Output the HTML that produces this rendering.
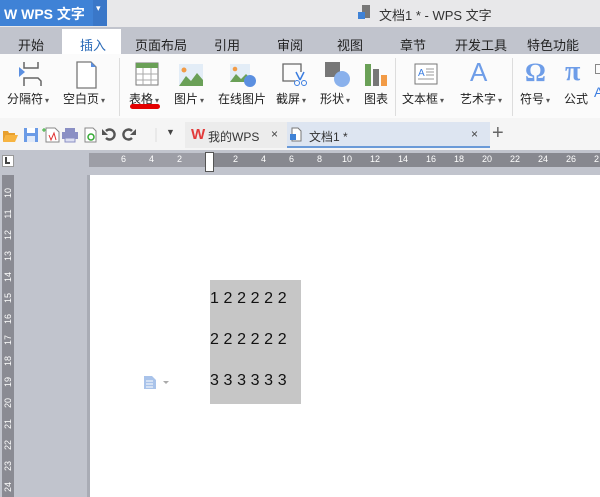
<!DOCTYPE html>
<html><head><meta charset="utf-8"><style>
*{margin:0;padding:0;box-sizing:border-box}
body{width:600px;height:497px;overflow:hidden;background:#c1c4cd;position:relative;font-family:"Liberation Sans","Noto Sans CJK SC",sans-serif;font-size:12px;color:#222}
.a{position:absolute}
.t{position:absolute;white-space:nowrap}
.lbl{position:absolute;top:90px;font-size:12px;color:#222;white-space:nowrap}
.dd{font-size:8px;color:#555;margin-left:2px}
.rn{position:absolute;top:154px;font-size:9px;color:#fff;font-family:"Liberation Sans",sans-serif}
.vn{position:absolute;left:2px;width:12px;font-size:9px;color:#fff;transform:rotate(-90deg);text-align:center}
.row{position:absolute;left:210px;font-size:16px;color:#111;letter-spacing:0.1px;white-space:nowrap}
</style></head><body>
<!-- title bar -->
<div class="a" style="left:0;top:0;width:600px;height:27px;background:#e8e8ea"></div>
<div class="a" style="left:0;top:0;width:93px;height:26px;background:#3f82d6"></div>
<div class="a" style="left:93px;top:0;width:14px;height:26px;background:#3a77c8"></div>
<div class="t" style="left:4px;top:4px;color:#fff;font-weight:bold;font-size:14px">W WPS 文字</div>
<div class="t" style="left:96px;top:3px;color:#fff;font-size:9px">▾</div>
<svg class="a" style="left:358px;top:5px" width="14" height="14"><rect x="4" y="0" width="8" height="13" fill="#777"/><rect x="0" y="7" width="7" height="7" fill="#3f82d6"/></svg>
<div class="t" style="left:379px;top:5px;font-size:13px;color:#333">文档1 * - WPS 文字</div>
<!-- tabs -->
<div class="a" style="left:62px;top:29px;width:59px;height:25px;background:#fff"></div>
<div class="t" style="left:18px;top:35px;font-size:13px">开始</div>
<div class="t" style="left:80px;top:35px;font-size:13px;color:#2b6bb8">插入</div>
<div class="t" style="left:135px;top:35px;font-size:13px">页面布局</div>
<div class="t" style="left:214px;top:35px;font-size:13px">引用</div>
<div class="t" style="left:277px;top:35px;font-size:13px">审阅</div>
<div class="t" style="left:337px;top:35px;font-size:13px">视图</div>
<div class="t" style="left:400px;top:35px;font-size:13px">章节</div>
<div class="t" style="left:455px;top:35px;font-size:13px">开发工具</div>
<div class="t" style="left:527px;top:35px;font-size:13px">特色功能</div>
<!-- ribbon -->
<div class="a" style="left:0;top:54px;width:600px;height:64px;background:#fbfbfb"></div>
<div class="a" style="left:119px;top:58px;width:1px;height:58px;background:#ddd"></div>
<div class="a" style="left:395px;top:58px;width:1px;height:58px;background:#ddd"></div>
<div class="a" style="left:512px;top:58px;width:1px;height:58px;background:#ddd"></div>
<svg class="a" style="left:18px;top:61px" width="26" height="26"><path d="M6 1v6h14V1M6 25v-8h14l3 3v5" fill="none" stroke="#666" stroke-width="1.5"/><path d="M1 6l6 5-6 5z" fill="#5b8fe0"/></svg>
<svg class="a" style="left:76px;top:61px" width="22" height="28"><path d="M1 1h14l5 5v21H1z" fill="#fff" stroke="#777" stroke-width="1.3"/><path d="M15 1l5 5h-5z" fill="#5b8fe0"/></svg>
<div class="lbl" style="left:7px">分隔符<span class="dd">▾</span></div>
<div class="lbl" style="left:63px">空白页<span class="dd">▾</span></div>
<svg class="a" style="left:135px;top:62px" width="24" height="24"><rect x="1" y="1" width="22" height="22" fill="#fff" stroke="#777"/><rect x="1" y="1" width="22" height="5" fill="#6aa057"/><path d="M1 12h22M1 18h22M8 6v17M16 6v17" stroke="#aaa"/></svg>
<svg class="a" style="left:179px;top:64px" width="24" height="22"><rect width="24" height="22" fill="#e3edf7"/><circle cx="5" cy="6" r="2.5" fill="#f29b46"/><path d="M0 22l7-10 5 5 6-8 6 7v6z" fill="#6aa057"/></svg>
<svg class="a" style="left:230px;top:64px" width="26" height="24"><rect width="20" height="18" fill="#e3edf7"/><circle cx="5" cy="5" r="2.3" fill="#f29b46"/><path d="M0 18l6-8 5 5 5-5 4 4v4z" fill="#6aa057"/><circle cx="20" cy="17" r="6" fill="#5b8fe0"/></svg>
<svg class="a" style="left:281px;top:62px" width="26" height="26"><path d="M14 19H2V2h18v8" fill="none" stroke="#666" stroke-width="1.3"/><path d="M15 10l4 8M23 10l-4 8" stroke="#3b7de0" stroke-width="1.5"/><circle cx="16" cy="21" r="2.5" fill="none" stroke="#3b7de0"/><circle cx="23" cy="21" r="2.5" fill="none" stroke="#3b7de0"/></svg>
<svg class="a" style="left:325px;top:62px" width="26" height="26"><rect x="0" y="0" width="15" height="15" fill="#777"/><circle cx="17" cy="17" r="8" fill="#8ab1ec"/></svg>
<svg class="a" style="left:365px;top:62px" width="24" height="24"><rect x="0" y="2" width="6" height="22" fill="#6aa057"/><rect x="8" y="7" width="6" height="17" fill="#777"/><rect x="16" y="13" width="6" height="11" fill="#f29b46"/></svg>
<div class="lbl" style="left:129px;color:#222">表格<span class="dd">▾</span></div>
<div class="a" style="left:130px;top:104px;width:30px;height:5px;border-radius:3px;background:#e40000"></div>
<div class="lbl" style="left:174px">图片<span class="dd">▾</span></div>
<div class="lbl" style="left:218px">在线图片</div>
<div class="lbl" style="left:276px">截屏<span class="dd">▾</span></div>
<div class="lbl" style="left:320px">形状<span class="dd">▾</span></div>
<div class="lbl" style="left:364px">图表</div>
<svg class="a" style="left:414px;top:63px" width="24" height="22"><rect x="1" y="1" width="22" height="20" fill="#fff" stroke="#777"/><text x="4" y="13" font-size="10" fill="#3b7de0" font-family="Liberation Sans">A</text><path d="M12 6h8M12 9h8M12 12h8M4 16h16" stroke="#999"/></svg>
<div class="t" style="left:470px;top:57px;font-size:26px;color:#6e9de8;font-family:'Liberation Sans'">A</div>
<div class="lbl" style="left:402px">文本框<span class="dd">▾</span></div>
<div class="lbl" style="left:460px">艺术字<span class="dd">▾</span></div>
<div class="t" style="left:525px;top:58px;font-size:26px;color:#6e9de8;font-family:'Liberation Serif';font-weight:bold">Ω</div>
<div class="t" style="left:565px;top:56px;font-size:28px;color:#6e9de8;font-family:'Liberation Serif';font-weight:bold">π</div>
<div class="lbl" style="left:520px">符号<span class="dd">▾</span></div>
<div class="lbl" style="left:564px">公式</div>
<div class="a" style="left:595px;top:64px;width:6px;height:10px;border:1px solid #888"></div>
<div class="t" style="left:594px;top:84px;color:#3b7de0;font-size:14px">A</div>
<!-- quick toolbar -->
<div class="a" style="left:0;top:118px;width:600px;height:32px;background:#f5f5f5"></div>
<svg class="a" style="left:2px;top:127px" width="160" height="16">
<path d="M1 4h5l1 2h6v2H4l-3 7z" fill="#e8a02e"/><path d="M1 15l3-7h12l-3 7z" fill="#f7b441"/>
<rect x="22" y="1" width="14" height="14" fill="#6b9be6"/><rect x="25" y="1" width="8" height="5" fill="#fff"/><rect x="25" y="9" width="8" height="6" fill="#dfe9f9"/>
<path d="M44 1h9l4 4v10H44z" fill="#fff" stroke="#888"/><path d="M47 8l2 5 3-7 2 7" stroke="#e03030" fill="none"/><path d="M40 3h4M42 1v4" stroke="#3a3"/>
<rect x="63" y="1" width="10" height="4" fill="#8a8fc4"/><rect x="60" y="5" width="16" height="7" fill="#8a8fc4"/><rect x="63" y="11" width="10" height="4" fill="#dcdff2" stroke="#8a8fc4"/>
<path d="M83 1h8l3 3v11H83z" fill="#fff" stroke="#888"/><circle cx="89" cy="10" r="3" fill="none" stroke="#3a3" stroke-width="1.5"/>
<path d="M104 11a5 5 0 1 0 0-7" fill="none" stroke="#555" stroke-width="2.4"/><path d="M100 2v6h6z" fill="#555"/>
<path d="M130 11a5 5 0 1 1 0-7" fill="none" stroke="#555" stroke-width="2.4"/><path d="M134 2v6h-6z" fill="#555"/>
<path d="M154 1v14" stroke="#ddd"/></svg>
<div class="t" style="left:166px;top:127px;font-size:9px;color:#444">▼</div>
<div class="a" style="left:185px;top:122px;width:102px;height:26px;background:#ececec"></div>
<div class="t" style="left:191px;top:126px;font-size:15px;font-weight:bold;color:#e23b3b;font-family:'Liberation Sans'">W</div>
<div class="t" style="left:208px;top:128px;font-size:12px;color:#333">我的WPS</div>
<div class="t" style="left:271px;top:127px;font-size:12px;color:#444">×</div>
<div class="a" style="left:287px;top:122px;width:203px;height:26px;background:#dde5f1;border-bottom:2px solid #6a9ad8"></div>
<svg class="a" style="left:290px;top:127px" width="12" height="15"><path d="M2 1h6l3 3v10H2z" fill="#fff" stroke="#777"/><rect x="0" y="7" width="6" height="6" fill="#3f82d6"/></svg>
<div class="t" style="left:309px;top:128px;font-size:12px;color:#333">文档1 *</div>
<div class="t" style="left:471px;top:127px;font-size:12px;color:#444">×</div>
<div class="t" style="left:492px;top:122px;font-size:20px;color:#666">+</div>
<!-- rulers -->
<div class="a" style="left:0;top:150px;width:600px;height:25px;background:#c1c4cd"></div>
<div class="a" style="left:2px;top:155px;width:12px;height:12px;background:#fff;border:1px solid #999"></div>
<div class="a" style="left:5px;top:157px;width:5px;height:7px;border-left:2px solid #444;border-bottom:2px solid #444"></div>
<div class="a" style="left:89px;top:153px;width:120px;height:14px;background:#9d9ea6"></div>
<div class="a" style="left:209px;top:153px;width:391px;height:14px;background:#87888f"></div>
<div class="a" style="left:205px;top:152px;width:9px;height:20px;background:#fff;border:1px solid #555"></div>
<div class="rn" style="left:121px">6</div><div class="rn" style="left:149px">4</div><div class="rn" style="left:177px">2</div>
<div class="rn" style="left:233px">2</div><div class="rn" style="left:261px">4</div><div class="rn" style="left:289px">6</div>
<div class="rn" style="left:317px">8</div><div class="rn" style="left:342px">10</div><div class="rn" style="left:370px">12</div><div class="rn" style="left:398px">14</div><div class="rn" style="left:426px">16</div><div class="rn" style="left:454px">18</div><div class="rn" style="left:482px">20</div><div class="rn" style="left:510px">22</div><div class="rn" style="left:538px">24</div><div class="rn" style="left:566px">26</div><div class="rn" style="left:594px">2</div>
<div class="a" style="left:2px;top:175px;width:12px;height:322px;background:#8a8b93"></div>
<div class="vn" style="top:188px">10</div><div class="vn" style="top:209px">11</div><div class="vn" style="top:230px">12</div><div class="vn" style="top:251px">13</div><div class="vn" style="top:272px">14</div><div class="vn" style="top:293px">15</div><div class="vn" style="top:314px">16</div><div class="vn" style="top:335px">17</div><div class="vn" style="top:356px">18</div><div class="vn" style="top:377px">19</div><div class="vn" style="top:398px">20</div><div class="vn" style="top:419px">21</div><div class="vn" style="top:440px">22</div><div class="vn" style="top:461px">23</div><div class="vn" style="top:482px">24</div>
<!-- page -->
<div class="a" style="left:87px;top:175px;width:3px;height:322px;background:#a9acb5"></div>
<div class="a" style="left:90px;top:175px;width:510px;height:322px;background:#fff"></div>
<div class="a" style="left:210px;top:280px;width:91px;height:124px;background:#c6c6c6"></div>
<div class="row" style="top:290px">1 2 2 2 2 2</div>
<div class="row" style="top:331px">2 2 2 2 2 2</div>
<div class="row" style="top:372px">3 3 3 3 3 3</div>
<svg class="a" style="left:143px;top:375px" width="28" height="15"><path d="M1 1h8l4 4v9H1z" fill="#a9c3ea"/><path d="M3 6h7M3 9h7M3 12h7" stroke="#fff"/><path d="M20 6h6l-3 3z" fill="#aaa"/></svg>
</body></html>
